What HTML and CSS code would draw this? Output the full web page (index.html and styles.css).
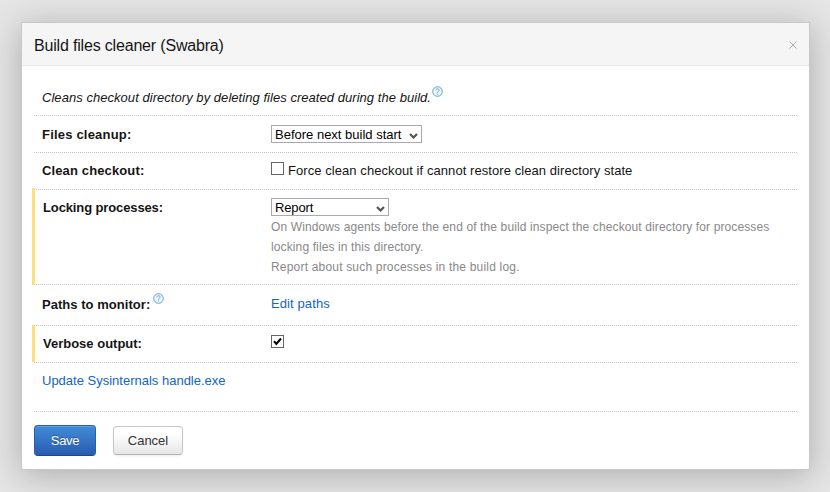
FILE: index.html
```html
<!DOCTYPE html>
<html lang="en">
<head>
<meta charset="utf-8">
<title>Build files cleaner (Swabra)</title>
<link rel="stylesheet" href="styles.css">
</head>
<body>
<div class="dialog">
  <div class="header">
    <h1 class="title">Build files cleaner (Swabra)</h1>
    <svg class="close" width="8" height="8" viewBox="0 0 8 8"><path d="M.5.5l7 7M7.500.5l-7 7"/></svg>
  </div>
  <div class="content">
    <div class="row intro">
      <em class="description">Cleans checkout directory by deleting files created during the build.</em>
      <svg class="help" width="11" height="11" viewBox="0 0 11 11"><circle cx="5.500" cy="5.500" r="4.800"/><path d="M3.800 4.500C3.800 2.200 7.200 2.200 7.200 4.200C7.200 5.300 5.500 5.300 5.500 6.800M5.500 7.600V8.600"/></svg>
    </div>
    <div class="row cleanup">
      <div class="label"><span class="t-files">Files cleanup:</span></div>
      <div class="value">
        <div class="select select-wide"><span class="t-before">Before next build start</span><svg class="arrow" width="9" height="6" viewBox="0 0 9 6"><path d="M1 1l3.500 3.500L8 1"/></svg></div>
      </div>
    </div>
    <div class="row checkout">
      <div class="label"><span class="t-clean">Clean checkout:</span></div>
      <div class="value check-line"><span class="checkbox"></span><span class="t-force">Force clean checkout if cannot restore clean directory state</span></div>
    </div>
    <div class="row locking modified">
      <div class="label"><span class="t-locking">Locking processes:</span></div>
      <div class="value">
        <div class="select select-narrow"><span class="t-report">Report</span><svg class="arrow" width="9" height="6" viewBox="0 0 9 6"><path d="M1 1l3.500 3.500L8 1"/></svg></div>
        <div class="note"><span class="t-note1">On Windows agents before the end of the build inspect the checkout directory for processes</span><br><span class="t-note2">locking files in this directory.</span><br><span class="t-note3">Report about such processes in the build log.</span></div>
      </div>
    </div>
    <div class="row paths">
      <div class="label"><span class="t-paths">Paths to monitor:</span><svg class="help" width="11" height="11" viewBox="0 0 11 11"><circle cx="5.500" cy="5.500" r="4.800"/><path d="M3.800 4.500C3.800 2.200 7.200 2.200 7.200 4.200C7.200 5.300 5.500 5.300 5.500 6.800M5.500 7.600V8.600"/></svg></div>
      <div class="value"><a class="link t-edit">Edit paths</a></div>
    </div>
    <div class="row verbose modified">
      <div class="label"><span class="t-verbose">Verbose output:</span></div>
      <div class="value"><span class="checkbox"><svg width="11" height="11" viewBox="0 0 11 11"><path d="M2 5.200L4.300 8L9 2.500"/></svg></span></div>
    </div>
    <div class="row update"><a class="link t-update">Update Sysinternals handle.exe</a></div>
    <div class="buttons">
      <button class="btn save"><span class="t-save">Save</span></button>
      <button class="btn cancel"><span class="t-cancel">Cancel</span></button>
    </div>
  </div>
</div>
</body>
</html>
```
FILE: styles.css
```css
* { box-sizing: border-box; }
body {
  margin: 0;
  padding: 22px 20px 0 21px;
  height: 492px;
  overflow: hidden;
  background: #e5e5e5;
  color: #151515;
  font: 13px/20px "Liberation Sans", Arial, sans-serif;
}
span, a, em { white-space: nowrap; }
.dialog {
  width: 789px;
  height: 448px;
  background: #fff;
  border: 1px solid #c8c8c8;
  box-shadow: 0 5px 32px rgba(0, 0, 0, .25);
}
.header {
  display: flex;
  justify-content: space-between;
  height: 43px;
  padding: 12px 12px 0;
  background: #f5f5f5;
  border-bottom: 1px solid #e8e8e8;
}
.title { margin: 1px 0 0; font-size: 16px; line-height: 20px; font-weight: 400; letter-spacing: -.18px; }
.close { margin-top: 6px; stroke: #aaa; stroke-width: 1; }
.content { padding: 0 12px; }
.row {
  display: flex;
  align-items: flex-start;
  border-bottom: 1px dotted #c4c4c4;
  padding-left: 8px;
}
.label { display: flex; width: 229px; font-weight: 700; }
.intro { height: 50px; padding-top: 22px; }
.description { letter-spacing: .045px; }
.help { flex: none; fill: #edf6fc; stroke: #61a3d0; stroke-width: 1; }
.help path { fill: none; stroke-width: .9; }
.intro .help { margin-top: -2px; margin-left: 1px; }
.cleanup { height: 37px; padding-top: 9px; }
.checkout { height: 37px; padding-top: 8px; }
.locking { height: 95px; padding-top: 8px; }
.paths { height: 41px; padding-top: 9px; }
.t-paths { padding-top: 1px; letter-spacing: .04px; }
.paths .help { margin: -1px 0 0 3px; }
.verbose { height: 37px; padding-top: 8px; }
.update { height: 49px; padding-top: 8px; }
.modified { position: relative; padding-left: 9px; }
.modified::before {
  content: "";
  position: absolute;
  left: -2px;
  top: -2px;
  bottom: -1px;
  width: 3px;
  background: #ffde7d;
}
.verbose.modified::before { top: -1px; bottom: 0; }
.modified .label { width: 228px; }
.t-files { letter-spacing: .2px; }
.t-clean { letter-spacing: .13px; }
.t-force { letter-spacing: .068px; }
.t-locking { letter-spacing: -.12px; }
.t-note1, .t-note2 { letter-spacing: .12px; }
.t-note3 { letter-spacing: .19px; }
.t-edit { letter-spacing: .1px; }
.select {
  display: flex;
  justify-content: space-between;
  height: 18px;
  padding: 0 3px;
  border: 1px solid #aaa9ad;
  line-height: 17px;
  color: #000;
}
.select-wide { width: 151px; }
.select-narrow { width: 118px; }
.t-report { letter-spacing: -.15px; }
.arrow { flex: none; margin-top: 7px; fill: none; stroke: #555; stroke-width: 2.200; }
.check-line { display: flex; }
.checkbox {
  display: block;
  width: 13px;
  height: 13px;
  margin: 1px 4px 0 0;
  border: 1px solid #666;
  background: #fff;
}
.checkbox svg { display: block; fill: none; stroke: #000; stroke-width: 2; }
.note { color: #888; margin-top: 1px; font-size: 12px; }
.link { color: #1564c0; }
.buttons { display: flex; align-items: flex-start; padding-top: 13px; gap: 17px; }
.btn {
  font: 13px/20px "Liberation Sans", Arial, sans-serif;
  border-radius: 4px;
  padding: 0;
  text-align: center;
}
.save {
  width: 62px;
  height: 31px;
  color: #fff;
  text-shadow: 0 -1px 0 rgba(0, 0, 0, .3);
  background: linear-gradient(#418cd8, #2a5baf);
  border: 1px solid #285fad;
  border-bottom-color: #20468d;
  box-shadow: inset 0 1px 0 #5d9fe0;
}
.t-save { letter-spacing: -.3px; }
.cancel {
  width: 70px;
  height: 29px;
  margin-top: 1px;
  color: #333;
  background: linear-gradient(#fff 25%, #e6e6e6);
  border: 1px solid #c8c8c8;
  border-bottom-color: #b5b5b5;
  box-shadow: 0 1px 2px rgba(0, 0, 0, .08);
}
```
